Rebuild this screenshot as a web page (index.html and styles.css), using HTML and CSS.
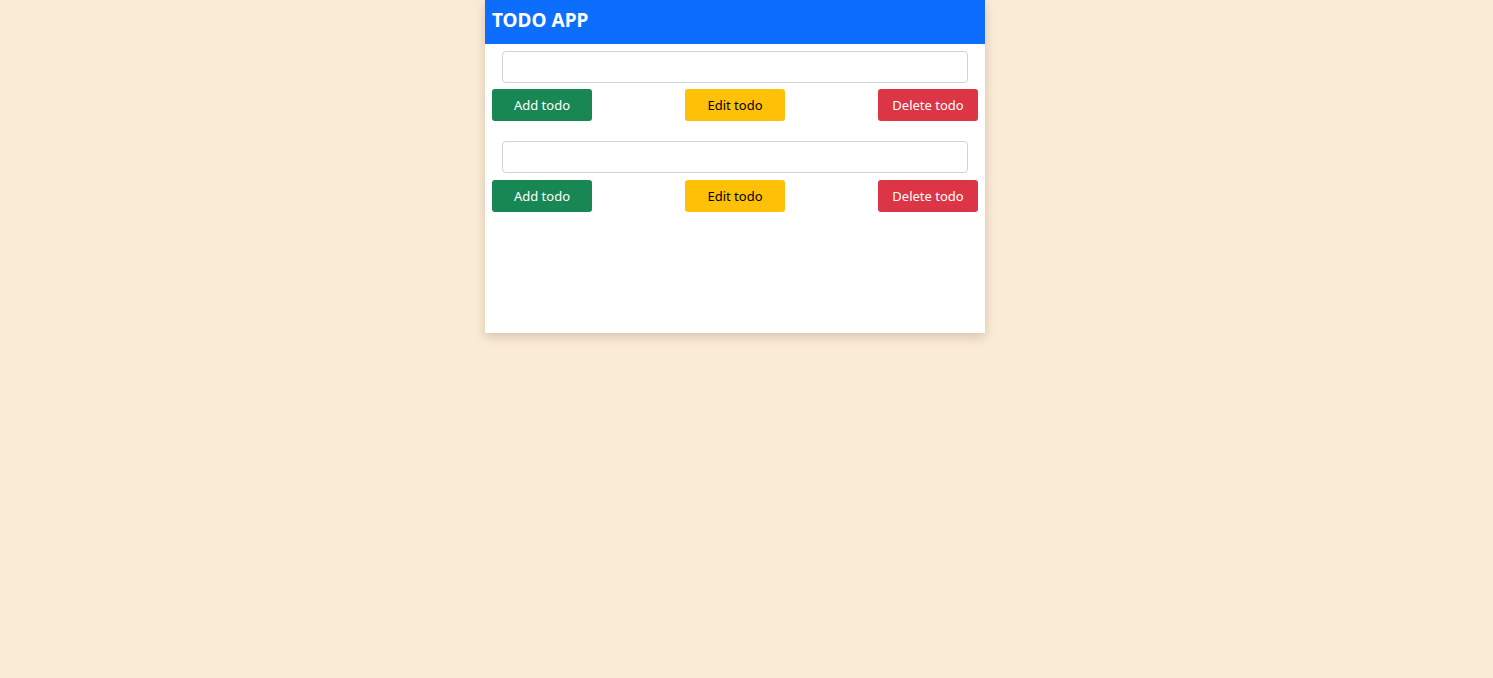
FILE: index.html
```html
<!DOCTYPE html>
<html lang="en">
<head>
<meta charset="utf-8">
<title>Todo App</title>
<link rel="stylesheet" href="styles.css">
</head>
<body>
<div class="app">
  <header class="app-header">TODO APP</header>
  <div class="todo-group">
    <input class="todo-input" type="text">
    <div class="btn-row">
      <button class="btn btn-success">Add todo</button>
      <button class="btn btn-warning">Edit todo</button>
      <button class="btn btn-danger">Delete todo</button>
    </div>
  </div>
  <div class="todo-group">
    <input class="todo-input" type="text">
    <div class="btn-row">
      <button class="btn btn-success">Add todo</button>
      <button class="btn btn-warning">Edit todo</button>
      <button class="btn btn-danger">Delete todo</button>
    </div>
  </div>
</div>
</body>
</html>
```

FILE: styles.css
```css
html, body {
  margin: 0;
  padding: 0;
}
body {
  background: #faebd7;
  font-family: "Noto Sans", "Open Sans", sans-serif;
  min-height: 678px;
  display: flex;
  justify-content: center;
  align-items: flex-start;
  padding-right: 23px;
}
.app {
  width: 500px;
  height: 333px;
  background: #fff;
  box-shadow: 0 4px 10px rgba(90, 60, 20, 0.22);
  box-sizing: border-box;
}
.app-header {
  background: #0d6efd;
  color: #fff;
  height: 44px;
  box-sizing: border-box;
  padding: 0 7px 4px;
  display: flex;
  align-items: center;
  font-size: 19px;
  font-weight: 700;
}
.todo-group {
  display: flex;
  flex-direction: column;
  padding: 7px 7px 13px;
  gap: 6px;
}
.todo-group + .todo-group {
  padding-top: 7px;
  gap: 7px;
}
.todo-input {
  margin: 0 10px;
  height: 32px;
  box-sizing: border-box;
  border: 1px solid #ced4da;
  border-radius: 4px;
  background: #fff;
  font: inherit;
  font-size: 14px;
  padding: 4px 10px;
  outline: none;
}
.btn-row {
  display: flex;
  justify-content: space-between;
}
.btn {
  width: 100px;
  height: 32px;
  border: none;
  border-radius: 3px;
  font-family: inherit;
  font-size: 13px;
  padding: 0;
  cursor: pointer;
}
.btn-success {
  background: #198754;
  color: #fff;
}
.btn-warning {
  background: #ffc107;
  color: #000;
}
.btn-danger {
  background: #dc3545;
  color: #fff;
}
```
